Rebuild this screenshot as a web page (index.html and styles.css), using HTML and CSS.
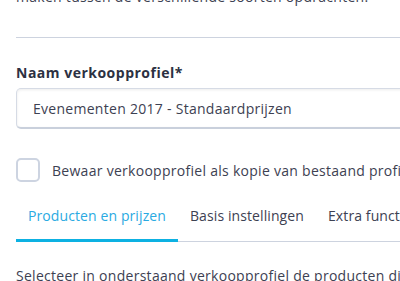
FILE: index.html
```html
<!DOCTYPE html>
<html lang="nl">
<head>
    <meta charset="UTF-8">
    <meta name="viewport" content="width=device-width, initial-scale=1.0">
    <title>Verkoopprofiel</title>
    <link rel="stylesheet" href="styles.css">
</head>
<body>

<div class="page">
    <p class="intro">maken tussen de verschillende soorten opdrachten.</p>
    <hr class="divider">

    <label class="field-label" for="profile-name">Naam verkoopprofiel*</label>
    <input id="profile-name" class="text-input" type="text" value="Evenementen 2017 - Standaardprijzen">

    <label class="check-row">
        <span class="checkbox"></span>
        <span>Bewaar verkoopprofiel als kopie van bestaand profiel</span>
    </label>

    <div class="tabs">
        <div class="tab active">Producten en prijzen</div>
        <div class="tab">Basis instellingen</div>
        <div class="tab">Extra functies</div>
    </div>

    <p class="tab-text">Selecteer in onderstaand verkoopprofiel de producten die je wilt aanbieden.</p>
</div>

</body>
</html>
```

FILE: styles.css
```css
html, body {
    margin: 0;
    background-color: #ffffff;
    overflow: hidden;
}
body {
    font-family: "Open Sans", sans-serif;
    font-size: 14px;
    letter-spacing: 0.28px;
    color: #3d4152;
}
.page {
    width: 700px;
    padding-left: 16px;
}
.intro {
    margin: -13px 0 0 0;
    line-height: 20px;
    font-size: 14px;
}
.divider {
    border: none;
    border-top: 1px solid #cdd3df;
    margin: 30px 0 0 0;
}
.field-label {
    display: block;
    margin-top: 25px;
    font-weight: 700;
    font-size: 14px;
    letter-spacing: 0.5px;
    color: #2c3142;
}
.text-input {
    display: block;
    box-sizing: border-box;
    width: 100%;
    height: 41px;
    margin-top: 6px;
    padding: 0 16px;
    font-family: inherit;
    font-size: 14px;
    letter-spacing: 0.28px;
    color: #3d4152;
    border: 1px solid #d6dbe5;
    border-bottom: 2px solid #c9d0dc;
    border-radius: 5px;
    box-shadow: inset 0 1px 3px rgba(0, 0, 0, 0.08);
}
.check-row {
    display: flex;
    align-items: center;
    gap: 12px;
    margin-top: 29px;
    white-space: nowrap;
}
.checkbox {
    width: 20px;
    height: 20px;
    border: 2px solid #cdd4e1;
    border-radius: 5px;
}
.tabs {
    display: flex;
    margin-top: 12px;
    border-bottom: 1px solid #cdd3df;
}
.tab {
    padding: 12px 12px 14px;
    letter-spacing: 0.1px;
    white-space: nowrap;
}
.tab.active {
    color: #2aaae2;
    border-bottom: 3px solid #0db1e2;
    margin-bottom: -1px;
}
.tab-text {
    margin: 24px 0 0 0;
    white-space: nowrap;
}
```
